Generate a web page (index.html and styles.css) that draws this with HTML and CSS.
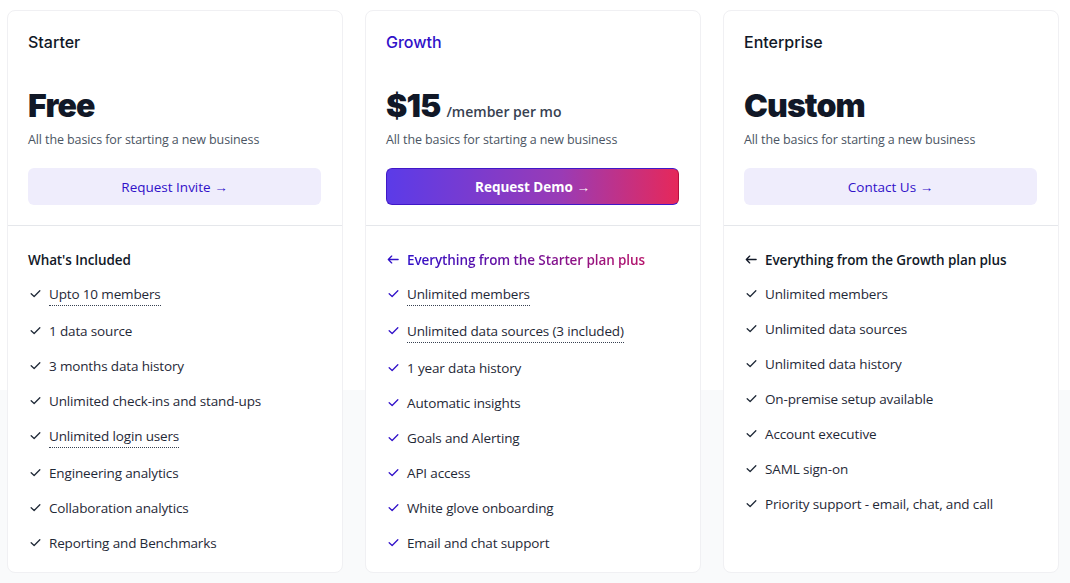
FILE: index.html
```html
<!DOCTYPE html>
<html lang="en">
<head>
  <meta charset="UTF-8">
  <title>Pricing</title>
  <link rel="stylesheet" href="styles.css">
</head>
<body>

  <main class="plans">

    <section class="plan">
      <div class="plan-top">
        <h3 class="plan-name">Starter</h3>
        <p class="price">Free</p>
        <p class="blurb">All the basics for starting a new business</p>
        <button class="cta">Request Invite &rarr;</button>
      </div>
      <div class="plan-features">
        <h4 class="included">What's Included</h4>
        <ul>
          <li><svg class="tick" viewBox="0 0 24 24"><polyline points="4 12.5 9.5 17.5 20 7"/></svg><span class="dotted">Upto 10 members</span></li>
          <li><svg class="tick" viewBox="0 0 24 24"><polyline points="4 12.5 9.5 17.5 20 7"/></svg><span>1 data source</span></li>
          <li><svg class="tick" viewBox="0 0 24 24"><polyline points="4 12.5 9.5 17.5 20 7"/></svg><span>3 months data history</span></li>
          <li><svg class="tick" viewBox="0 0 24 24"><polyline points="4 12.5 9.5 17.5 20 7"/></svg><span>Unlimited check-ins and stand-ups</span></li>
          <li><svg class="tick" viewBox="0 0 24 24"><polyline points="4 12.5 9.5 17.5 20 7"/></svg><span class="dotted">Unlimited login users</span></li>
          <li><svg class="tick" viewBox="0 0 24 24"><polyline points="4 12.5 9.5 17.5 20 7"/></svg><span>Engineering analytics</span></li>
          <li><svg class="tick" viewBox="0 0 24 24"><polyline points="4 12.5 9.5 17.5 20 7"/></svg><span>Collaboration analytics</span></li>
          <li><svg class="tick" viewBox="0 0 24 24"><polyline points="4 12.5 9.5 17.5 20 7"/></svg><span>Reporting and Benchmarks</span></li>
        </ul>
      </div>
    </section>

    <section class="plan featured">
      <div class="plan-top">
        <h3 class="plan-name">Growth</h3>
        <p class="price">$15 <small>/member per mo</small></p>
        <p class="blurb">All the basics for starting a new business</p>
        <button class="cta">Request Demo &rarr;</button>
      </div>
      <div class="plan-features">
        <h4 class="included"><svg class="back" viewBox="0 0 14 10"><path d="M13 5H1.5M5.5 1L1.5 5l4 4"/></svg><span class="grad">Everything from the Starter plan plus</span></h4>
        <ul>
          <li><svg class="tick" viewBox="0 0 24 24"><polyline points="4 12.5 9.5 17.5 20 7"/></svg><span class="dotted">Unlimited members</span></li>
          <li><svg class="tick" viewBox="0 0 24 24"><polyline points="4 12.5 9.5 17.5 20 7"/></svg><span class="dotted">Unlimited data sources (3 included)</span></li>
          <li><svg class="tick" viewBox="0 0 24 24"><polyline points="4 12.5 9.5 17.5 20 7"/></svg><span>1 year data history</span></li>
          <li><svg class="tick" viewBox="0 0 24 24"><polyline points="4 12.5 9.5 17.5 20 7"/></svg><span>Automatic insights</span></li>
          <li><svg class="tick" viewBox="0 0 24 24"><polyline points="4 12.5 9.5 17.5 20 7"/></svg><span>Goals and Alerting</span></li>
          <li><svg class="tick" viewBox="0 0 24 24"><polyline points="4 12.5 9.5 17.5 20 7"/></svg><span>API access</span></li>
          <li><svg class="tick" viewBox="0 0 24 24"><polyline points="4 12.5 9.5 17.5 20 7"/></svg><span>White glove onboarding</span></li>
          <li><svg class="tick" viewBox="0 0 24 24"><polyline points="4 12.5 9.5 17.5 20 7"/></svg><span>Email and chat support</span></li>
        </ul>
      </div>
    </section>

    <section class="plan">
      <div class="plan-top">
        <h3 class="plan-name">Enterprise</h3>
        <p class="price">Custom</p>
        <p class="blurb">All the basics for starting a new business</p>
        <button class="cta">Contact Us &rarr;</button>
      </div>
      <div class="plan-features">
        <h4 class="included"><svg class="back" viewBox="0 0 14 10"><path d="M13 5H1.5M5.5 1L1.5 5l4 4"/></svg>Everything from the Growth plan plus</h4>
        <ul>
          <li><svg class="tick" viewBox="0 0 24 24"><polyline points="4 12.5 9.5 17.5 20 7"/></svg><span>Unlimited members</span></li>
          <li><svg class="tick" viewBox="0 0 24 24"><polyline points="4 12.5 9.5 17.5 20 7"/></svg><span>Unlimited data sources</span></li>
          <li><svg class="tick" viewBox="0 0 24 24"><polyline points="4 12.5 9.5 17.5 20 7"/></svg><span>Unlimited data history</span></li>
          <li><svg class="tick" viewBox="0 0 24 24"><polyline points="4 12.5 9.5 17.5 20 7"/></svg><span>On-premise setup available</span></li>
          <li><svg class="tick" viewBox="0 0 24 24"><polyline points="4 12.5 9.5 17.5 20 7"/></svg><span>Account executive</span></li>
          <li><svg class="tick" viewBox="0 0 24 24"><polyline points="4 12.5 9.5 17.5 20 7"/></svg><span>SAML sign-on</span></li>
          <li><svg class="tick" viewBox="0 0 24 24"><polyline points="4 12.5 9.5 17.5 20 7"/></svg><span>Priority support - email, chat, and call</span></li>
        </ul>
      </div>
    </section>

  </main>

</body>
</html>
```

FILE: styles.css
```css
* {
  box-sizing: border-box;
}
body {
  margin: 0;
  font-family: 'Open Sans', 'Noto Sans', sans-serif;
  color: #1f2937;
  background: linear-gradient(to bottom, #fff 0, #fff 390px, #f9fafb 390px);
  min-height: 583px;
}
.plans {
  display: grid;
  grid-template-columns: repeat(3, 336px);
  gap: 22px;
  padding: 10px 9px 0 7px;
  align-items: start;
}
.plan {
  background: white;
  border: 1px solid #f0f0f3;
  border-radius: 8px;
  height: 563px;
  display: flex;
  flex-direction: column;
}
.plan-top {
  padding: 21px 21px 20px 20px;
  border-bottom: 1px solid #e5e7eb;
}
.plan-name {
  margin: 0;
  font-family: 'Inter', sans-serif;
  font-size: 16px;
  font-weight: 500;
  line-height: 20px;
  color: #111827;
}
.featured .plan-name {
  color: #3111c9;
}
.price {
  margin: 34px 0 0;
  height: 40px;
  display: flex;
  align-items: baseline;
  gap: 6px;
  font-family: 'Inter', sans-serif;
  font-size: 32px;
  font-weight: 900;
  line-height: 40px;
  color: #111827;
  letter-spacing: -0.9px;
}
.price small {
  font-family: 'Open Sans', sans-serif;
  font-size: 14px;
  font-weight: 600;
  line-height: 20px;
  letter-spacing: 0;
  color: #374151;
}
.blurb {
  margin: 4px 0 0;
  font-size: 12.5px;
  line-height: 20px;
  color: #4b5563;
  letter-spacing: -0.1px;
}
.cta {
  display: block;
  width: 100%;
  margin-top: 18px;
  height: 37px;
  border: none;
  border-radius: 6px;
  background: #efedfc;
  color: #3111c9;
  font-family: 'Open Sans', sans-serif;
  font-size: 13.5px;
  font-weight: 500;
  cursor: pointer;
}
.featured .cta {
  background: linear-gradient(to right, #5b3be8, #9a3bb5 60%, #e6285a);
  border: 1px solid #4018c8;
  border-right-color: #b4103f;
  color: white;
  font-weight: 700;
}
.plan-features {
  padding: 24px 21px 21px 20px;
  flex: 1;
}
.included {
  margin: 0 0 14px;
  font-size: 13.5px;
  font-weight: 600;
  line-height: 20px;
  color: #111827;
  display: flex;
  align-items: center;
  letter-spacing: -0.1px;
}
.back {
  width: 12px;
  height: 9px;
  margin: 0 8px 2px 1px;
  flex-shrink: 0;
  fill: none;
  stroke: #111827;
  stroke-width: 1.5;
  stroke-linecap: round;
  stroke-linejoin: round;
}
.featured .back {
  stroke: #3111c9;
}
.grad {
  background: linear-gradient(to right, #3111c9, #b5136a);
  -webkit-background-clip: text;
  background-clip: text;
  color: transparent;
}
ul {
  list-style: none;
  margin: 0;
  padding: 0;
  display: flex;
  flex-direction: column;
  gap: 15px;
}
li {
  display: flex;
  align-items: flex-start;
  font-size: 13.5px;
  line-height: 20px;
  color: #1f2937;
  letter-spacing: -0.15px;
}
.tick {
  width: 13px;
  height: 13px;
  margin: 3px 7px 0 1px;
  flex-shrink: 0;
  fill: none;
  stroke: #1f2937;
  stroke-width: 2.4;
  stroke-linecap: round;
  stroke-linejoin: round;
}
.featured .tick {
  stroke: #3111c9;
}
.dotted {
  border-bottom: 1px dotted #374151;
  padding-bottom: 1px;
}
```
